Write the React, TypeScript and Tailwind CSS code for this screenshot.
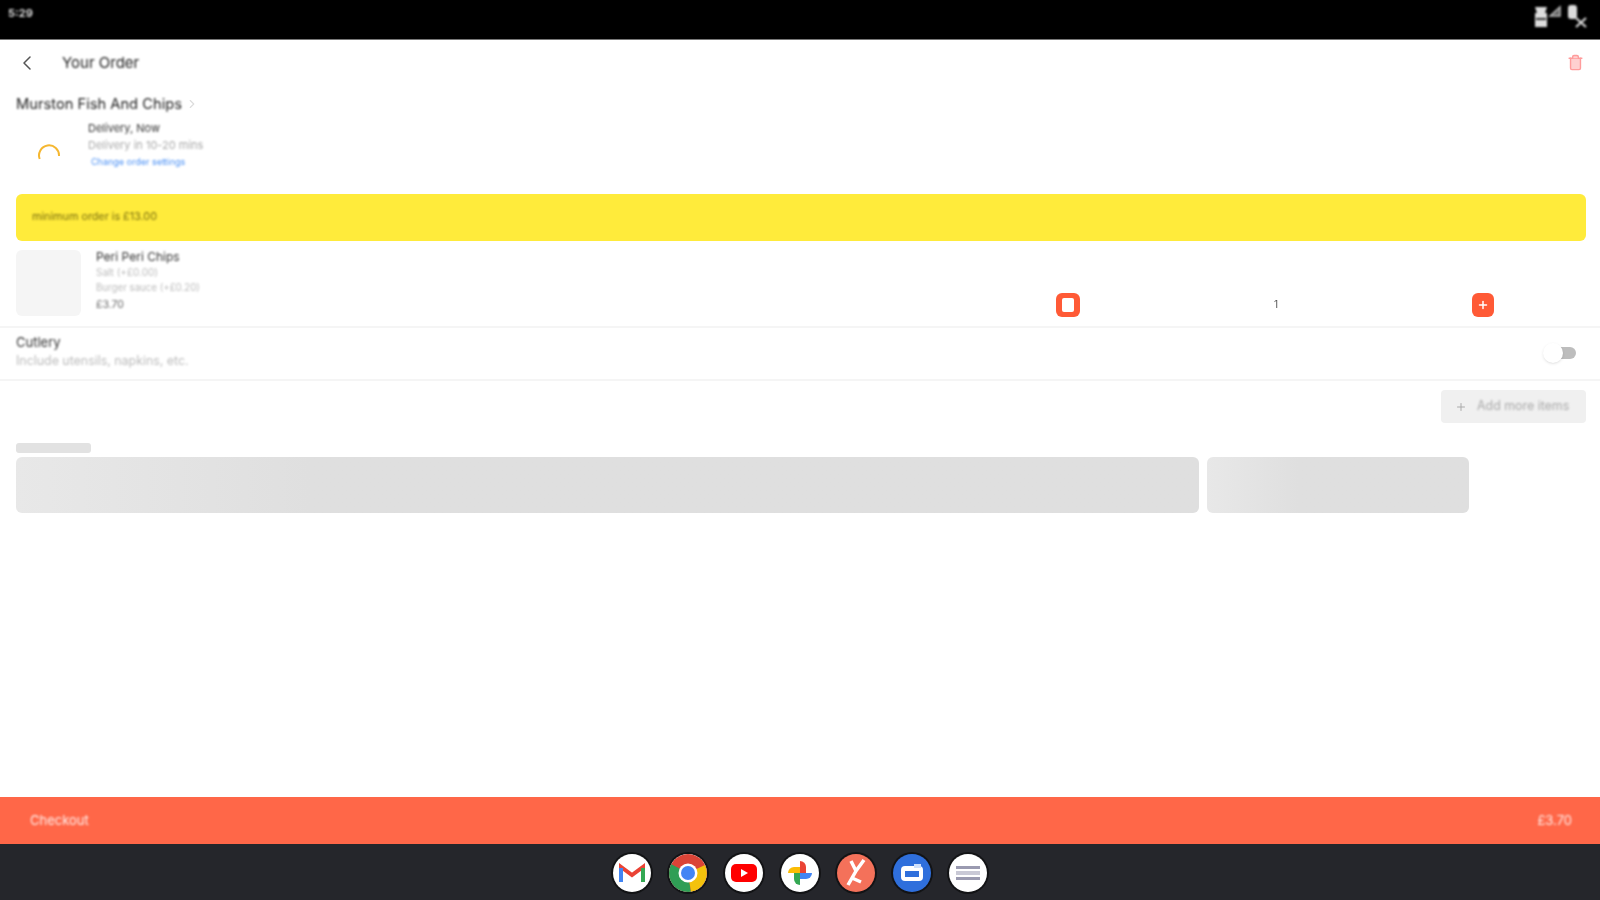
import React from 'react';
import { ChevronLeft, ChevronRight, Plus, Trash2 } from 'lucide-react';

function StatusBar() {
  return (
    <div className="h-[40px] bg-black flex justify-between pl-[8px] pr-[12px] border-b border-[#777] shrink-0">
      <span className="text-[11px] leading-[26px] font-bold text-[#ddd] blur-[0.8px]">5:29</span>
      <div className="flex items-start gap-[4px] pt-[4px] blur-[0.8px]">
        <svg width="30" height="24" viewBox="0 0 30 24">
          <path d="M3 3h12l-2 6h2v14H3V9h2z" fill="#ddd" />
          <path d="M4 14h10v2H4z" fill="#333" />
          <path d="M18 12L28 3v9z" fill="#666" stroke="#bbb" strokeWidth="1.5" />
        </svg>
        <svg width="22" height="24" viewBox="0 0 22 24">
          <rect x="2" y="1" width="9" height="14" rx="3" fill="#ddd" />
          <path d="M10 14l10 9M20 14l-10 9" stroke="#ddd" strokeWidth="2" />
        </svg>
      </div>
    </div>
  );
}

function OrderHeader() {
  return (
    <div className="h-[45px] flex items-center justify-between pl-[15px] pr-[16px]">
      <div className="flex items-center">
        <ChevronLeft size={24} strokeWidth={1.5} className="text-[#555] blur-[0.4px]" />
        <span className="ml-[23px] pt-[2px] text-[15px] text-[#222] blur-[0.8px]">Your Order</span>
      </div>
      <Trash2 size={17} className="text-[#ff9c9c] blur-[0.5px]" fill="#ffd0d0" />
    </div>
  );
}

function DeliveryInfo() {
  return (
    <div className="px-[16px]">
      <div className="flex items-center h-[20px] mt-[9px]">
        <span className="text-[14.7px] text-[#222] blur-[0.8px]">Murston Fish And Chips</span>
        <ChevronRight size={14} className="text-[#ddd] ml-[3px]" />
      </div>
      <div className="flex mt-[6px]">
        <div className="w-[72px] flex justify-center pt-[23px] pl-[1px]">
          <svg width="24" height="24" viewBox="0 0 24 24" className="mr-[8px] blur-[0.4px]">
            <path d="M2.7 16 A10 10 0 1 1 22 13" fill="none" stroke="#f5b731" strokeWidth="2" />
          </svg>
        </div>
        <div className="blur-[0.8px]">
          <div className="text-[11px] leading-[16px] text-[#333]">Delivery, Now</div>
          <div className="text-[11px] leading-[18px] text-[#aaa]">Delivery in 10-20 mins</div>
          <div className="text-[9px] leading-[16px] text-[#4a90f5] pl-[3px]">Change order settings</div>
        </div>
      </div>
    </div>
  );
}

function OrderItem() {
  return (
    <div className="h-[87px] px-[16px] pt-[9px] border-b-2 border-[#f5f5f5] flex">
      <div className="w-[65px] h-[66px] rounded-[6px] bg-[#f5f5f5] shrink-0" />
      <div className="ml-[15px] w-[160px] shrink-0 h-[66px] blur-[0.8px]">
        <div className="text-[12px] leading-[14px] text-[#333]">Peri Peri Chips</div>
        <div className="text-[10px] leading-[16px] text-[#bbb]">Salt (+£0.00)</div>
        <div className="text-[9.7px] leading-[15px] text-[#bbb]">Burger sauce (+£0.20)</div>
        <div className="text-[10.5px] leading-[19px] text-[#666]">£3.70</div>
      </div>
      <div className="h-[67px] flex items-end">
        <div className="ml-[800px] w-[438px] flex items-center justify-between">
          <button className="w-[24px] h-[24px] rounded-[6px] bg-[#ff5a36] flex items-center justify-center blur-[0.4px]">
            <span className="block w-[12px] h-[14px] rounded-[2px] bg-white" />
          </button>
          <span className="text-[10px] text-[#555] blur-[0.5px] -mt-[2px]">1</span>
          <button className="w-[22px] h-[24px] rounded-[6px] bg-[#ff5a36] flex items-center justify-center blur-[0.4px]">
            <Plus size={12} strokeWidth={3} className="text-white" />
          </button>
        </div>
      </div>
    </div>
  );
}

function CutleryRow() {
  return (
    <div className="h-[53px] px-[16px] pr-[24px] pb-[3px] border-b-2 border-[#f5f5f5] flex items-center justify-between">
      <div className="blur-[0.8px]">
        <div className="text-[13px] leading-[18px] text-[#333]">Cutlery</div>
        <div className="text-[12.4px] leading-[20px] text-[#bbb]">Include utensils, napkins, etc.</div>
      </div>
      <div className="relative w-[32px] h-[12px] rounded-full bg-[#bdbdbd] mt-[2px] blur-[0.4px]">
        <span className="absolute -left-[1px] -top-[4px] w-[20px] h-[20px] rounded-full bg-white shadow" />
      </div>
    </div>
  );
}

function DockIcon({ bg, children }: { bg: string; children: React.ReactNode }) {
  return (
    <div className={`w-[38px] h-[38px] rounded-full ring-[2px] ring-black/50 flex items-center justify-center overflow-hidden blur-[0.5px] ${bg}`}>
      {children}
    </div>
  );
}

function Dock() {
  return (
    <div className="h-[56px] bg-[#25262b] flex items-center justify-center gap-[18px] pt-[1px] shrink-0">
      <DockIcon bg="bg-white">
        <svg width="26" height="20" viewBox="0 0 26 20">
          <path d="M2 19V4l11 8 11-8v15" fill="none" stroke="#ea4335" strokeWidth="4" />
          <path d="M2 19V5" stroke="#4285f4" strokeWidth="4" />
          <path d="M24 19V5" stroke="#34a853" strokeWidth="4" />
        </svg>
      </DockIcon>
      <DockIcon bg="bg-white">
        <svg width="38" height="38" viewBox="0 0 38 38">
          <circle cx="19" cy="19" r="19" fill="#db4437" />
          <path d="M19 19L2 10A19 19 0 0 0 22 38z" fill="#2f9e55" />
          <path d="M19 19L36 11A19 19 0 0 1 22 38z" fill="#f4c20d" />
          <circle cx="19" cy="19" r="9.5" fill="#fff" />
          <circle cx="19" cy="19" r="7" fill="#4285f4" />
        </svg>
      </DockIcon>
      <DockIcon bg="bg-white">
        <svg width="26" height="18" viewBox="0 0 26 18">
          <rect width="26" height="18" rx="5" fill="#f00" />
          <path d="M10 5l7 4-7 4z" fill="#fff" />
        </svg>
      </DockIcon>
      <DockIcon bg="bg-white">
        <svg width="30" height="30" viewBox="0 0 30 30">
          <path d="M15 15H3a6 6 0 0 1 6-6h6z" fill="#fbbc04" />
          <path d="M15 15V3a6 6 0 0 1 6 6v6z" fill="#ea4335" />
          <path d="M15 15h12a6 6 0 0 1-6 6h-6z" fill="#4285f4" />
          <path d="M15 15v12a6 6 0 0 1-6-6v-6z" fill="#34a853" />
        </svg>
      </DockIcon>
      <DockIcon bg="bg-[#f4715a]">
        <svg width="26" height="30" viewBox="0 0 26 30">
          <path d="M8 3l5 10 8-11M13 13L9 20M9 20l9 4M9 20L5 27" fill="none" stroke="#fff" strokeWidth="3.5" />
        </svg>
      </DockIcon>
      <DockIcon bg="bg-[#2f6fdc]">
        <svg width="22" height="18" viewBox="0 0 22 18">
          <rect y="2" width="22" height="15" rx="4" fill="#fff" />
          <rect x="4" y="7" width="14" height="6" fill="#2f6fdc" />
          <rect x="13" y="0" width="7" height="4" fill="#cfe0fb" />
        </svg>
      </DockIcon>
      <DockIcon bg="bg-white">
        <svg width="24" height="14" viewBox="0 0 24 14">
          <rect width="24" height="3" fill="#9a9ab0" />
          <rect y="5" width="24" height="4" fill="#c9c9d6" />
          <rect y="11" width="24" height="3" fill="#9a9ab0" />
        </svg>
      </DockIcon>
    </div>
  );
}

export default function App() {
  return (
    <div className="w-[1600px] h-[900px] flex flex-col bg-white overflow-hidden font-['Inter',sans-serif]">
      <StatusBar />
      <div className="flex-1 min-h-0">
        <OrderHeader />
        <DeliveryInfo />
        <div className="ml-[16px] mr-[14px] mt-[24px] h-[47px] rounded-[6px] bg-[#ffeb3b] flex items-center px-[16px]">
          <span className="text-[10.8px] text-[#7a6f10] blur-[0.8px]">minimum order is £13.00</span>
        </div>
        <OrderItem />
        <CutleryRow />
        <div className="flex justify-end px-[14px] pt-[9px]">
          <div className="w-[145px] h-[33px] rounded-[4px] bg-[#f0f0f0] flex items-center pl-[14px] text-[#aaa]">
            <Plus size={12} className="blur-[0.6px]" />
            <span className="ml-[10px] text-[12.4px] blur-[0.8px]">Add more items</span>
          </div>
        </div>
        <div className="mx-[16px] mt-[20px] w-[75px] h-[10px] bg-[#e2e2e2] rounded-[3px]" />
        <div className="mx-[16px] mt-[4px] flex gap-[8px]">
          <div className="w-[1183px] h-[56px] rounded-[6px] bg-gradient-to-r from-[#e8e8e8] to-[#dfdfdf] to-[25%]" />
          <div className="w-[262px] h-[56px] rounded-[6px] bg-gradient-to-r from-[#e8e8e8] to-[#dfdfdf] to-[35%]" />
        </div>
      </div>
      <div className="h-[47px] bg-[#ff6748] flex items-center justify-between pl-[30px] pr-[28px] shrink-0 text-[13px] text-[#fff0ec]">
        <span className="blur-[0.8px]">Checkout</span>
        <span className="blur-[0.8px]">£3.70</span>
      </div>
      <Dock />
    </div>
  );
}
